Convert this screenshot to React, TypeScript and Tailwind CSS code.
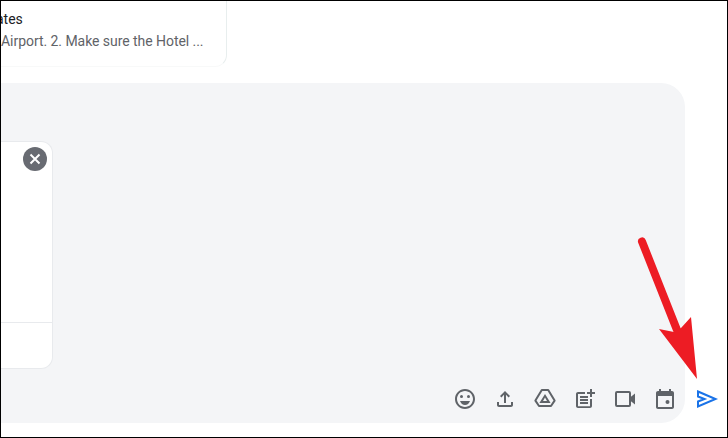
const toolbarIcons = [
  {
    label: "Emoji",
    body: (
      <>
        <path d="M11.99 2C6.47 2 2 6.48 2 12s4.47 10 9.99 10C17.52 22 22 17.52 22 12S17.52 2 11.99 2zM12 20c-4.42 0-8-3.58-8-8s3.58-8 8-8 8 3.58 8 8-3.58 8-8 8z" />
        <circle cx="8.5" cy="9.5" r="1.5" />
        <circle cx="15.5" cy="9.5" r="1.5" />
        <path d="M12 18c2.28 0 4.22-1.66 5-4H7c.78 2.34 2.72 4 5 4z" />
      </>
    ),
  },
  {
    label: "Upload",
    body: <path d="M18 15v3H6v-3H4v3c0 1.1.9 2 2 2h12c1.1 0 2-.9 2-2v-3h-2zM7 9l1.41 1.41L11 7.83V16h2V7.83l2.59 2.58L17 9l-5-5-5 5z" />,
  },
  {
    label: "Drive",
    body: (
      <>
        <path
          d="M8.8 3h6.4L21.6 13.6 18 19H6L2.4 13.6z"
          fill="none"
          stroke="currentColor"
          strokeWidth="2"
          strokeLinejoin="round"
        />
        <path d="M12 7L17.6 16H6.4zM12 10.6L10 14H14z" fillRule="evenodd" />
      </>
    ),
  },
  {
    label: "Add task",
    body: (
      <>
        <path d="M17 19.22H5V7h7V5H5c-1.1 0-2 .9-2 2v12c0 1.1.9 2 2 2h12c1.1 0 2-.9 2-2v-7h-2v7.22z" />
        <path d="M19 2h-2v3h-3c.01.01 0 2 0 2h3v2.99c.01.01 2 0 2 0V7h3V5h-3V2z" />
        <path d="M7 9h8v2H7zM7 12h8v2H7zM7 15h8v2H7z" />
      </>
    ),
  },
  {
    label: "Video",
    body: (
      <>
        <rect x="3" y="5" width="14" height="14" rx="1" fill="none" stroke="currentColor" strokeWidth="2" />
        <path d="M17 10.5L22 6.5V17.5L17 13.5z" />
      </>
    ),
  },
  {
    label: "Calendar",
    body: (
      <>
        <path d="M19 4h-1V2h-2v2H8V2H6v2H5c-1.11 0-1.99.9-1.99 2L3 20c0 1.1.89 2 2 2h14c1.1 0 2-.9 2-2V6c0-1.1-.9-2-2-2zm0 16H5V9h14v11z" />
        <circle cx="14.5" cy="15" r="2" />
      </>
    ),
  },
];

export default function App() {
  return (
    <div className="relative flex h-[438px] w-[728px] flex-col overflow-hidden border border-black bg-white font-['Roboto',sans-serif]">
      <div className="h-[66px] w-[226px] overflow-hidden rounded-br-xl border-r border-b border-r-[#e8eeee] border-b-[#f8f9f9]">
        <p className="mt-[9px] ml-[-5px] text-[14px] leading-[18px] text-[#202124]">ates</p>
        <p className="mt-1 truncate text-[14px] leading-[18px] tracking-[-0.05px] text-[#5f6368]">Airport. 2. Make sure the Hotel ...</p>
      </div>

      <div className="mt-4 flex">
        <div className="flex h-[340px] w-[684px] flex-col rounded-r-[24px] bg-[#f4f5f7]">
          <div className="relative mt-[58px] flex h-[228px] w-[52px] flex-col justify-end rounded-r-xl border-y border-r border-[#e8eaed] bg-white">
            <button className="absolute top-[5px] right-[5px] flex h-6 w-6 items-center justify-center rounded-full bg-[#686b72]" aria-label="Remove">
              <svg viewBox="0 0 24 24" className="h-[18px] w-[18px]" fill="none" stroke="white" strokeWidth="2.6">
                <path d="M6 6l12 12M18 6L6 18" />
              </svg>
            </button>
            <div className="h-[46px] border-t border-[#e8eaed]" />
          </div>

          <div className="mt-[10px] flex justify-end">
            {toolbarIcons.map((icon) => (
              <button key={icon.label} aria-label={icon.label} className="flex h-10 w-10 items-center justify-center text-[#5f6368]">
                <svg viewBox="0 0 24 24" className="h-6 w-6" fill="currentColor">
                  {icon.body}
                </svg>
              </button>
            ))}
          </div>
        </div>

        <button aria-label="Send" className="mb-1 ml-[2px] flex h-10 w-10 items-center justify-center self-end text-[#1a73e8]">
          <svg viewBox="0 0 24 24" className="h-6 w-6" fill="none" stroke="currentColor" strokeWidth="2" strokeLinejoin="miter">
            <path d="M3 4.5L20.5 12L3 19.5V14.5L9.5 12L3 9.5z" />
          </svg>
        </button>
      </div>

      {/* red annotation arrow on top of the screenshot */}
      <svg className="absolute top-[-1px] left-[-1px]" width="728" height="438" fill="none">
        <path d="M642 241.5L677 330" stroke="#ed1c24" strokeWidth="8" strokeLinecap="round" />
        <path d="M697 379L659 329L674 332L681 328L691 317z" fill="#ed1c24" />
      </svg>
    </div>
  );
}
